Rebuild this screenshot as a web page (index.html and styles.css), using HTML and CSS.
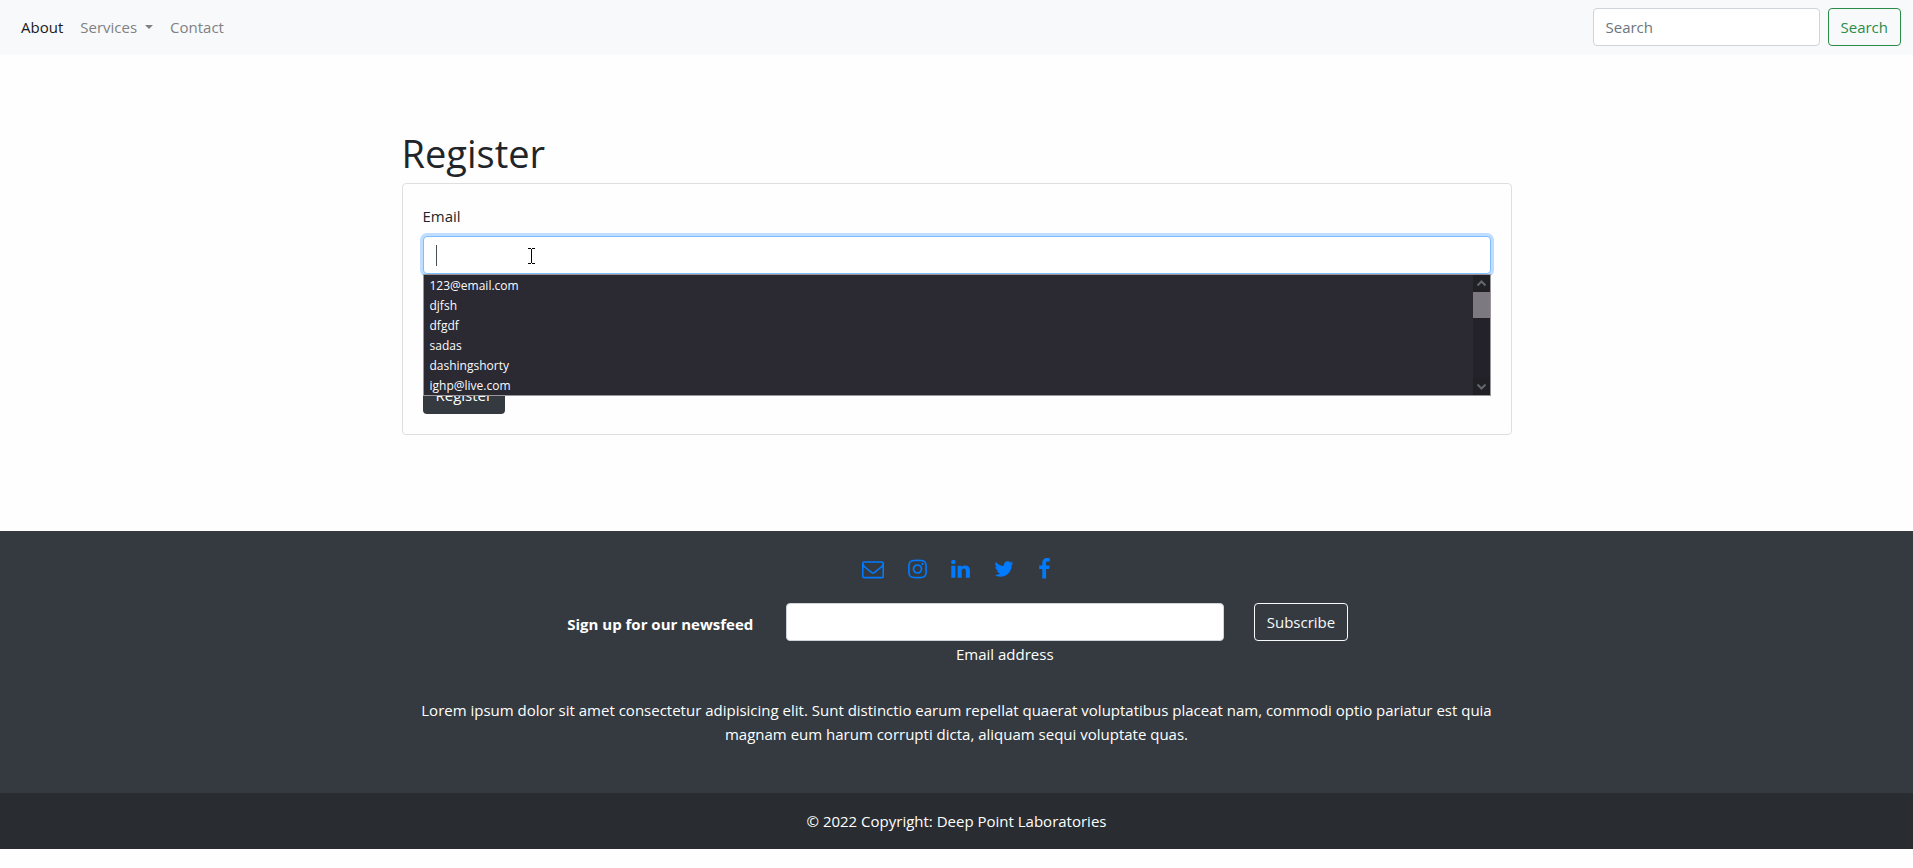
FILE: index.html
```html
<!DOCTYPE html>
<html lang="en">
<head>
<meta charset="utf-8">
<meta name="viewport" content="width=device-width, initial-scale=1">
<title>Register</title>
<link rel="stylesheet" href="styles.css">
</head>
<body>
<nav class="navbar">
  <div class="nav-links">
    <a class="nav-link active" href="#">About</a>
    <a class="nav-link dropdown-toggle" href="#">Services</a>
    <a class="nav-link" href="#">Contact</a>
  </div>
  <form class="search">
    <input class="control search-input" type="search" placeholder="Search" aria-label="Search">
    <button class="btn btn-outline-success" type="button">Search</button>
  </form>
</nav>

<main class="container register">
  <h1>Register</h1>
  <form class="card">
    <label for="email">Email</label>
    <div class="field">
      <input class="control focused" id="email" type="text">
      <span class="caret"></span>
      <svg class="pointer" viewBox="0 0 7 16" fill="none" stroke="#000" aria-hidden="true"><path d="M0 .5h3M4 .5h3M3.500 1v14M0 15.500h3M4 15.500h3"/></svg>
      <div class="suggestions">
        <ul class="options">
          <li>123@email.com</li>
          <li>djfsh</li>
          <li>dfgdf</li>
          <li>sadas</li>
          <li>dashingshorty</li>
          <li>ighp@live.com</li>
        </ul>
        <div class="scrollbar">
          <svg class="arrow" viewBox="0 0 17 17" aria-hidden="true"><path d="M4.500 10.500l4-4 4 4"/></svg>
          <div class="thumb"></div>
          <svg class="arrow arrow-down" viewBox="0 0 17 17" aria-hidden="true"><path d="M4.500 6.500l4 4 4-4"/></svg>
        </div>
      </div>
    </div>
    <button class="btn btn-dark" type="button">Register</button>
  </form>
</main>

<footer class="footer">
  <div class="container footer-body">
    <div class="social">
      <a href="#" aria-label="Email"><svg width="22" height="22" viewBox="0 0 1792 1792"><path d="M1664 1504v-768q-32 36-69 66-268 206-426 338-51 43-83 67t-86.5 48.5-102.5 24.5h-2q-48 0-102.5-24.5t-86.5-48.5-83-67q-158-132-426-338-37-30-69-66v768q0 13 9.500 22.500t22.500 9.500h1472q13 0 22.500-9.500t9.500-22.500zm0-1051v-24.500l-.5-13-3-12.500-5.500-9-9-7.500-14-2.500h-1472q-13 0-22.500 9.500t-9.500 22.500q0 168 147 284 193 152 401 317 6 5 35 29.500t46 37.500 44.500 31.500 50.500 27.500 43 9h2q20 0 43-9t50.500-27.500 44.500-31.500 46-37.500 35-29.500q208-165 401-317 54-43 100.500-115.500t46.500-131.500zm128-37v1088q0 66-47 113t-113 47h-1472q-66 0-113-47t-47-113v-1088q0-66 47-113t113-47h1472q66 0 113 47t47 113z"/></svg></a>
      <a href="#" aria-label="Instagram"><svg width="19" height="22" viewBox="128 0 1536 1792"><path d="M1152 896q0-106-75-181t-181-75-181 75-75 181 75 181 181 75 181-75 75-181zm138 0q0 164-115 279t-279 115-279-115-115-279 115-279 279-115 279 115 115 279zm108-410q0 38-27 65t-65 27-65-27-27-65 27-65 65-27 65 27 27 65zm-502-220q-7 0-76.500-.5t-105.500 0-96.500 3-103 10-71.500 18.500q-50 20-88 58t-58 88q-11 29-18.500 71.500t-10 103-3 96.500 0 105.500.5 76.500-.5 76.500 0 105.500 3 96.500 10 103 18.500 71.500q20 50 58 88t88 58q29 11 71.500 18.500t103 10 96.500 3 105.500 0 76.500-.5 76.500.5 105.500 0 96.500-3 103-10 71.500-18.500q50-20 88-58t58-88q11-29 18.500-71.500t10-103 3-96.500 0-105.500-.5-76.500.5-76.500 0-105.500-3-96.500-10-103-18.500-71.500q-20-50-58-88t-88-58q-29-11-71.500-18.500t-103-10-96.500-3-105.500 0-76.500.5zm768 630q0 229-5 317-10 208-124 322t-322 124q-88 5-317 5t-317-5q-208-10-322-124t-124-322q-5-88-5-317t5-317q10-208 124-322t322-124q88-5 317-5t317 5q208 10 322 124t124 322q5 88 5 317z"/></svg></a>
      <a href="#" aria-label="LinkedIn"><svg width="19" height="22" viewBox="128 0 1536 1792"><path d="M477 625v991h-330v-991h330zm21-306q1 73-50.500 122t-135.500 49h-2q-82 0-132-49t-50-122q0-74 51.500-122.500t134.500-48.500 133 48.500 51 122.500zm1166 729v568h-329v-530q0-105-40.500-164.500t-126.500-59.500q-63 0-105.500 34.500t-63.500 85.500q-11 30-11 81v553h-329q2-399 2-647t-1-296l-1-48h329v144h-2q20-32 41-56t56.500-52 87-43.500 114.500-15.500q171 0 275 113.500t104 332.500z"/></svg></a>
      <a href="#" aria-label="Twitter"><svg width="20" height="22" viewBox="64 0 1664 1792"><path d="M1684 408q-67 98-162 167 1 14 1 42 0 130-38 259.500t-115.500 248.500-184.500 210.500-258 146-323 54.500q-271 0-496-145 35 4 78 4 225 0 401-138-105-2-188-64.500t-114-159.500q33 5 61 5 43 0 85-11-112-23-185.500-111.500t-73.500-205.500v-4q68 38 146 41-66-44-105-115t-39-154q0-88 44-163 121 149 294.500 238.500t371.500 99.500q-8-38-8-74 0-134 94.500-228.500t228.500-94.500q140 0 236 102 109-21 205-78-37 115-142 178 93-10 186-50z"/></svg></a>
      <a href="#" aria-label="Facebook"><svg width="13" height="22" viewBox="384 0 1056 1792"><path d="M1343 12v264h-157q-86 0-116 36t-30 108v189h293l-39 296h-254v759h-306v-759h-255v-296h255v-218q0-186 104-288.500t277-102.500q147 0 228 12z"/></svg></a>
    </div>
    <form class="newsfeed">
      <p class="newsfeed-title">Sign up for our newsfeed</p>
      <div class="newsfeed-field">
        <input class="control" id="news-email" type="email">
        <label for="news-email">Email address</label>
      </div>
      <button class="btn btn-outline-light" type="button">Subscribe</button>
    </form>
    <p class="blurb">Lorem ipsum dolor sit amet consectetur adipisicing elit. Sunt distinctio earum repellat quaerat voluptatibus placeat nam, commodi optio pariatur est quia magnam eum harum corrupti dicta, aliquam sequi voluptate quas.</p>
  </div>
  <div class="copyright">© 2022 Copyright: Deep Point Laboratories</div>
</footer>
</body>
</html>
```
FILE: styles.css
```css
*,
*::before,
*::after {
  box-sizing: border-box;
}

body {
  margin: 0;
  background: #fefefe;
  color: #212529;
  font-family: "Open Sans", "Noto Sans", sans-serif;
  font-size: 15px;
  line-height: 24px;
}

h1,
p,
ul {
  margin: 0;
  padding: 0;
}

a {
  text-decoration: none;
}

.container {
  width: 100%;
  max-width: 1140px;
  margin: 0 auto;
  padding: 0 15px;
}

/* Controls */

.control {
  display: block;
  width: 100%;
  height: 38px;
  padding: 6px 12px;
  border: 1px solid #ced4da;
  border-radius: 4px;
  background: #fff;
  color: #495057;
  font: inherit;
}

.control::placeholder {
  color: #6c757d;
  opacity: 1;
}

.focused,
.control:focus {
  border-color: #80bdff;
  box-shadow: 0 0 0 3px #bfdeff;
  outline: 0;
}

.btn {
  height: 38px;
  padding: 6px 12px;
  border: 1px solid transparent;
  border-radius: 4px;
  background: transparent;
  font: inherit;
  white-space: nowrap;
}

.btn-outline-success {
  border-color: #2b8c47;
  color: #2b8c47;
}

.btn-outline-light {
  border-color: #f8f9fa;
  color: #f8f9fa;
}

.btn-dark {
  background: #343a40;
  color: #fff;
}

/* Navigation */

.navbar {
  display: flex;
  align-items: center;
  justify-content: space-between;
  padding: 8px 12px 9px;
  background: #f8f9fb;
}

.nav-links,
.search {
  display: flex;
  align-items: center;
}

.nav-links {
  gap: 1px;
  padding-left: 1px;
}

.nav-link {
  padding: 7px 8px;
  color: #808182;
}

.nav-link.active {
  color: #191a1a;
}

.dropdown-toggle::after {
  content: "";
  display: inline-block;
  margin-left: 8px;
  border-top: 4px solid;
  border-right: 4px solid transparent;
  border-left: 4px solid transparent;
  vertical-align: 4px;
}

.search {
  gap: 8px;
}

.search-input {
  width: 227px;
}

/* Register form */

.register {
  padding-top: 74px;
  padding-bottom: 96px;
}

h1 {
  margin-bottom: 6px;
  font-size: 38px;
  font-weight: 400;
  line-height: 48px;
}

.card {
  padding: 20px;
  border: 1px solid #dfdfdf;
  border-radius: 4px;
}

.card label {
  display: block;
  margin-bottom: 8px;
}

.field {
  position: relative;
  margin-bottom: 102px;
}

.caret {
  position: absolute;
  top: 9px;
  left: 13px;
  width: 1px;
  height: 21px;
  background: #495057;
}

.pointer {
  position: absolute;
  top: 12px;
  left: 105px;
  width: 7px;
  height: 16px;
}

.suggestions {
  position: absolute;
  top: 38px;
  right: 0;
  left: 0;
  display: flex;
  height: 122px;
  overflow: hidden;
  border: 1px solid #9a9699;
  background: #2b2a33;
  color: #fbfbfe;
}

.options {
  flex: 1;
  padding: 1px 0 0 6px;
  font-size: 12px;
  line-height: 20px;
  list-style: none;
}

.scrollbar {
  display: flex;
  flex-direction: column;
  width: 17px;
  background: #23222b;
}

.arrow {
  width: 17px;
  height: 17px;
  background: #212025;
  fill: none;
  stroke: #62686b;
  stroke-width: 2;
}

.arrow-down {
  margin-top: auto;
}

.thumb {
  height: 26px;
  background: #7c7a80;
}

/* Footer */

.footer {
  background: #343a40;
  color: #fff;
  text-align: center;
}

.footer-body {
  padding-top: 27px;
  padding-bottom: 47px;
}

.social {
  display: flex;
  justify-content: center;
  gap: 24px;
}

.social svg {
  display: block;
  fill: #007bff;
}

.newsfeed {
  display: flex;
  justify-content: center;
  gap: 30px;
  margin: 23px 0 32px;
}

.newsfeed-title {
  min-width: 191px;
  padding-top: 9px;
  font-weight: 700;
}

.newsfeed-field {
  flex: 0 1 438px;
}

.newsfeed-field label {
  display: block;
  padding-top: 1px;
}

.copyright {
  padding: 16px;
  background: #292d32;
}
```
